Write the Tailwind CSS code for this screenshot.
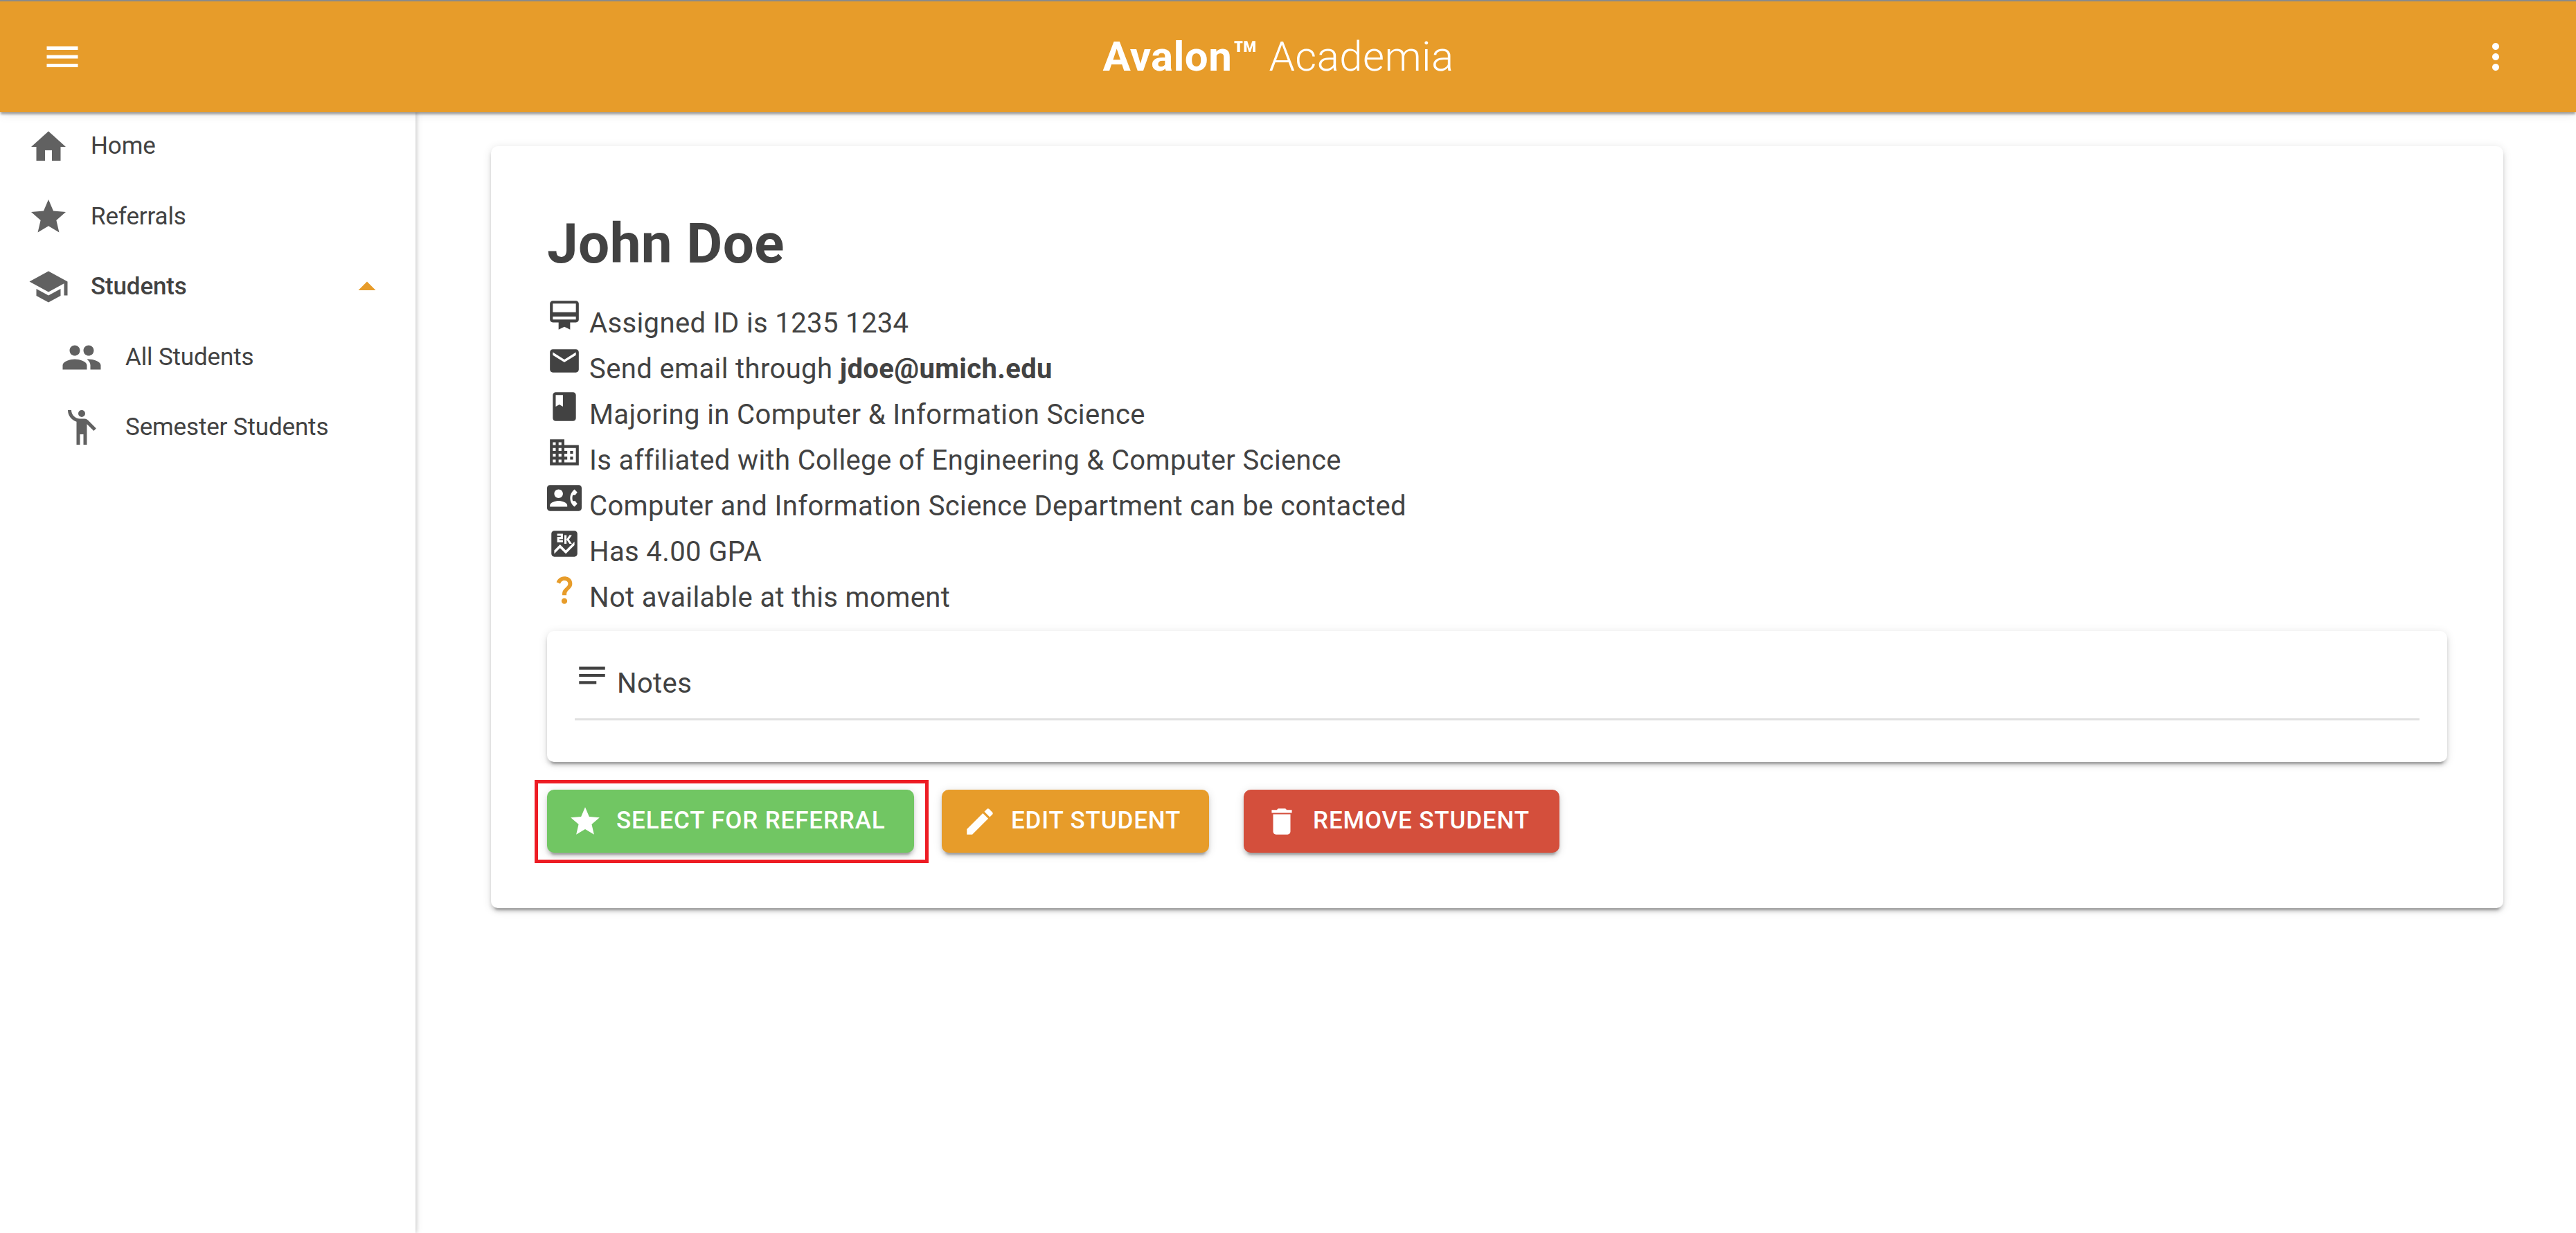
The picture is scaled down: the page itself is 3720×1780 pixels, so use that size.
<!DOCTYPE html>
<html lang="en">
<head>
    <meta charset="UTF-8">
    <title>Avalon Academia</title>
    <script src="https://cdn.jsdelivr.net/npm/@tailwindcss/browser@4"></script>
</head>
<body class="h-screen overflow-hidden bg-white font-['Roboto',sans-serif] text-[#424242]">

    <!-- App bar -->
    <header class="relative z-20 flex h-[162px] items-center border-t-2 border-[#8a8a8a] bg-[#e79c2a] text-white shadow-[0_4px_3px_-1px_rgba(0,0,0,0.32),0_2px_14px_0_rgba(0,0,0,0.12)]">
        <div class="flex w-[180px] justify-center">
            <svg class="h-[60px] w-[60px] fill-current" viewBox="0 0 24 24"><path d="M3 18h18v-2H3v2zm0-5h18v-2H3v2zm0-7v2h18V6H3z"/></svg>
        </div>
        <div class="flex-1 text-center text-[60px] font-light leading-none tracking-[0.4px]"><span class="font-bold">Avalon™</span> Academia</div>
        <div class="flex w-[208px] pl-[62px]">
            <svg class="h-[60px] w-[60px] fill-current" viewBox="0 0 24 24"><path d="M12 8c1.1 0 2-.9 2-2s-.9-2-2-2-2 .9-2 2 .9 2 2 2zm0 2c-1.1 0-2 .9-2 2s.9 2 2 2 2-.9 2-2-.9-2-2-2zm0 6c-1.1 0-2 .9-2 2s.9 2 2 2 2-.9 2-2-.9-2-2-2z"/></svg>
        </div>
    </header>

    <div class="flex h-[1618px]">
        <!-- Sidebar -->
        <aside class="relative z-10 -mt-[1px] w-[600px] shrink-0 text-[35px] tracking-[-0.15px] shadow-[2px_0_5px_0_rgba(0,0,0,0.14),1px_0_12px_0_rgba(0,0,0,0.08)]">
            <a class="flex h-[101.4px] items-center gap-[31px] pl-[40px]">
                <svg class="h-[60px] w-[60px] fill-[#616161]" viewBox="0 0 24 24"><path d="M10 20v-6h4v6h5v-8h3L12 3 2 12h3v8z"/></svg>
                <span>Home</span>
            </a>
            <a class="flex h-[101.4px] items-center gap-[31px] pl-[40px]">
                <svg class="h-[60px] w-[60px] fill-[#616161]" viewBox="0 0 24 24"><path d="M12 17.27L18.18 21l-1.64-7.03L22 9.24l-7.19-.61L12 2 9.19 8.63 2 9.24l5.46 4.73L5.82 21z"/></svg>
                <span>Referrals</span>
            </a>
            <a class="flex h-[101.4px] items-center gap-[31px] pl-[40px]">
                <svg class="h-[60px] w-[60px] fill-[#616161]" viewBox="0 0 24 24"><path d="M5 13.18v4L12 21l7-3.82v-4L12 17l-7-3.82zM12 3L1 9l11 6 9-4.91V17h2V9L12 3z"/></svg>
                <span class="font-medium">Students</span>
                <svg class="ml-auto mr-[40px] h-[60px] w-[60px] fill-[#e79c2a]" viewBox="0 0 24 24"><path d="M7 14l5-5 5 5z"/></svg>
            </a>
            <a class="flex h-[101.4px] items-center gap-[33px] pl-[88px]">
                <svg class="h-[60px] w-[60px] fill-[#616161]" viewBox="0 0 24 24"><path d="M16 11c1.66 0 2.99-1.34 2.99-3S17.66 5 16 5c-1.66 0-3 1.34-3 3s1.34 3 3 3zm-8 0c1.66 0 2.99-1.34 2.99-3S9.66 5 8 5C6.34 5 5 6.34 5 8s1.34 3 3 3zm0 2c-2.33 0-7 1.17-7 3.5V19h14v-2.5c0-2.33-4.67-3.5-7-3.5zm8 0c-.29 0-.62.02-.97.05 1.16.84 1.97 1.97 1.97 3.45V19h6v-2.5c0-2.33-4.67-3.5-7-3.5z"/></svg>
                <span>All Students</span>
            </a>
            <a class="flex h-[101.4px] items-center gap-[33px] pl-[88px]">
                <svg class="h-[60px] w-[60px] fill-[#616161]" viewBox="0 0 24 24"><circle cx="12" cy="4" r="2"/><path d="M15.89 8.11C15.5 7.72 14.83 7 13.53 7h-2.54C8.24 6.99 6 4.75 6 2H4c0 3.16 2.11 5.84 5 6.71V22h2v-6h2v6h2V10.05L18.95 14l1.41-1.41-4.47-4.48z"/></svg>
                <span>Semester Students</span>
            </a>
        </aside>

        <!-- Student details -->
        <main class="flex-1 pl-[109px] pr-[105px] pt-[49px]">
            <section class="rounded-[10px] bg-white px-[81px] pb-[80px] pt-[101px] shadow-[0_7.5px_2.5px_-5px_rgba(0,0,0,0.2),0_5px_5px_0_rgba(0,0,0,0.14),0_2.5px_12.5px_0_rgba(0,0,0,0.12)]">
                <h1 class="text-[80px] font-bold leading-none tracking-[0.4px]">John Doe</h1>

                <ul class="mt-[38px] text-[40px] leading-[66px] tracking-[0.375px]">
                    <li class="flex h-[66px] items-baseline gap-[11px]">
                        <svg class="h-[50px] w-[50px] shrink-0 fill-[#424242]" viewBox="0 0 24 24"><path d="M20 2H4c-1.11 0-2 .89-2 2v11c0 1.11.89 2 2 2h4v5l4-2 4 2v-5h4c1.11 0 2-.89 2-2V4c0-1.11-.89-2-2-2zm0 13H4v-2h16v2zm0-5H4V4h16v6z"/></svg>
                        <span>Assigned ID is 1235 1234</span>
                    </li>
                    <li class="flex h-[66px] items-baseline gap-[11px]">
                        <svg class="h-[50px] w-[50px] shrink-0 fill-[#424242]" viewBox="0 0 24 24"><path d="M20 4H4c-1.1 0-1.99.9-1.99 2L2 18c0 1.1.9 2 2 2h16c1.1 0 2-.9 2-2V6c0-1.1-.9-2-2-2zm0 4l-8 5-8-5V6l8 5 8-5v2z"/></svg>
                        <span>Send email through <b class="font-bold">jdoe@umich.edu</b></span>
                    </li>
                    <li class="flex h-[66px] items-baseline gap-[11px]">
                        <svg class="h-[50px] w-[50px] shrink-0 fill-[#424242]" viewBox="0 0 24 24"><path d="M18 2H6c-1.1 0-2 .9-2 2v16c0 1.1.9 2 2 2h12c1.1 0 2-.9 2-2V4c0-1.1-.9-2-2-2zM6 4h5v8l-2.5-1.5L6 12V4z"/></svg>
                        <span>Majoring in Computer &amp; Information Science</span>
                    </li>
                    <li class="flex h-[66px] items-baseline gap-[11px]">
                        <svg class="h-[50px] w-[50px] shrink-0 fill-[#424242]" viewBox="0 0 24 24"><path d="M12 7V3H2v18h20V7H12zM6 19H4v-2h2v2zm0-4H4v-2h2v2zm0-4H4V9h2v2zm0-4H4V5h2v2zm4 12H8v-2h2v2zm0-4H8v-2h2v2zm0-4H8V9h2v2zm0-4H8V5h2v2zm10 12h-8v-2h2v-2h-2v-2h2v-2h-2V9h8v10zm-2-8h-2v2h2v-2zm0 4h-2v2h2v-2z"/></svg>
                        <span>Is affiliated with College of Engineering &amp; Computer Science</span>
                    </li>
                    <li class="flex h-[66px] items-baseline gap-[11px]">
                        <svg class="h-[50px] w-[50px] shrink-0 fill-[#424242]" viewBox="0 0 24 24"><path d="M22 3H2C.9 3 0 3.9 0 5v14c0 1.1.9 2 2 2h20c1.1 0 1.99-.9 1.99-2L24 5c0-1.1-.9-2-2-2zM8 6c1.66 0 3 1.34 3 3s-1.34 3-3 3-3-1.34-3-3 1.34-3 3-3zm6 12H2v-1c0-2 4-3.1 6-3.1s6 1.1 6 3.1v1zm3.85-4h1.64L21 16l-1.99 1.99c-1.31-.98-2.28-2.38-2.73-3.99-.18-.64-.28-1.31-.28-2s.1-1.36.28-2c.45-1.62 1.42-3.01 2.73-3.99L21 8l-1.51 2h-1.64c-.22.63-.35 1.3-.35 2s.13 1.37.35 2z"/></svg>
                        <span>Computer and Information Science Department can be contacted</span>
                    </li>
                    <li class="flex h-[66px] items-baseline gap-[11px]">
                        <svg class="h-[50px] w-[50px] shrink-0 fill-[#424242]" viewBox="0 0 24 24"><path d="M19 3H5c-1.1 0-2 .9-2 2v14c0 1.1.9 2 2 2h14c1.1 0 2-.9 2-2V5c0-1.1-.9-2-2-2zM12 6h1.5v3l2-3h1.7l-2 3 2 3h-1.7l-2-3v3H12V6zM7 7.25h2.5V6.5H7V5h4v3.75H8.5v.75H11V11H7V7.25zM19 13l-6 6-4-4-4 4v-2.5l4-4 4 4 6-6V13z"/></svg>
                        <span>Has 4.00 GPA</span>
                    </li>
                    <li class="flex h-[66px] items-baseline gap-[11px]">
                        <svg class="h-[50px] w-[50px] shrink-0 fill-[#e79c2a]" viewBox="0 0 24 24"><path d="M11.07 12.85c.77-1.39 2.25-2.21 3.11-3.44.91-1.29.4-3.7-2.18-3.7-1.69 0-2.52 1.28-2.87 2.34L6.54 6.96C7.25 4.83 9.18 3 11.99 3c2.35 0 3.96 1.07 4.78 2.41.7 1.15 1.11 3.3.03 4.9-1.2 1.77-2.35 2.31-2.97 3.45-.25.46-.35.76-.35 2.24h-2.89c-.01-.78-.13-2.05.48-3.15zM14 20c0 1.1-.9 2-2 2s-2-.9-2-2 .9-2 2-2 2 .9 2 2z"/></svg>
                        <span>Not available at this moment</span>
                    </li>
                </ul>

                <!-- Notes -->
                <div class="mt-[19px] h-[189px] rounded-[10px] bg-white px-[40px] pt-[39px] shadow-[0_7.5px_2.5px_-5px_rgba(0,0,0,0.2),0_5px_5px_0_rgba(0,0,0,0.14),0_2.5px_12.5px_0_rgba(0,0,0,0.12)]">
                    <div class="flex h-[90px] items-baseline gap-[11px] border-b-[3px] border-[#e0e0e0] text-[40px] tracking-[0.375px]">
                        <svg class="h-[50px] w-[50px] shrink-0 fill-[#424242]" viewBox="0 0 24 24"><path d="M3 18h12v-2H3v2zM3 6v2h18V6H3zm0 7h18v-2H3v2z"/></svg>
                        <span>Notes</span>
                    </div>
                </div>

                <!-- Actions -->
                <div class="mt-[40px] flex gap-[50px] text-[35px] font-medium tracking-[0.85px] text-white">
                    <button class="relative flex h-[91px] w-[530px] items-center gap-[20px] rounded-[10px] bg-[#71c663] pl-[30px] uppercase shadow-[0_7.5px_2.5px_-5px_rgba(0,0,0,0.2),0_5px_5px_0_rgba(0,0,0,0.14),0_2.5px_12.5px_0_rgba(0,0,0,0.12)]">
                        <svg class="h-[50px] w-[50px] fill-white" viewBox="0 0 24 24"><path d="M12 17.27L18.18 21l-1.64-7.03L22 9.24l-7.19-.61L12 2 9.19 8.63 2 9.24l5.46 4.73L5.82 21z"/></svg>
                        <span>Select for referral</span>
                        <span class="absolute -bottom-[15px] -left-[18px] -right-[21px] -top-[14px] border-[5px] border-[#ed1c24]"></span>
                    </button>
                    <button class="-ml-[10px] flex h-[91px] w-[386px] items-center gap-[20px] rounded-[10px] bg-[#e79c2a] pl-[30px] uppercase shadow-[0_7.5px_2.5px_-5px_rgba(0,0,0,0.2),0_5px_5px_0_rgba(0,0,0,0.14),0_2.5px_12.5px_0_rgba(0,0,0,0.12)]">
                        <svg class="h-[50px] w-[50px] fill-white" viewBox="0 0 24 24"><path d="M3 17.25V21h3.75L17.81 9.94l-3.75-3.75L3 17.25zM20.71 7.04c.39-.39.39-1.02 0-1.41l-2.34-2.34c-.39-.39-1.02-.39-1.41 0l-1.83 1.83 3.75 3.75 1.83-1.83z"/></svg>
                        <span>Edit student</span>
                    </button>
                    <button class="flex h-[91px] w-[456px] items-center gap-[20px] rounded-[10px] bg-[#d44f3c] pl-[30px] uppercase shadow-[0_7.5px_2.5px_-5px_rgba(0,0,0,0.2),0_5px_5px_0_rgba(0,0,0,0.14),0_2.5px_12.5px_0_rgba(0,0,0,0.12)]">
                        <svg class="h-[50px] w-[50px] fill-white" viewBox="0 0 24 24"><path d="M6 19c0 1.1.9 2 2 2h8c1.1 0 2-.9 2-2V7H6v12zM19 4h-3.5l-1-1h-5l-1 1H5v2h14V4z"/></svg>
                        <span>Remove student</span>
                    </button>
                </div>
            </section>
        </main>
    </div>

</body>
</html>
